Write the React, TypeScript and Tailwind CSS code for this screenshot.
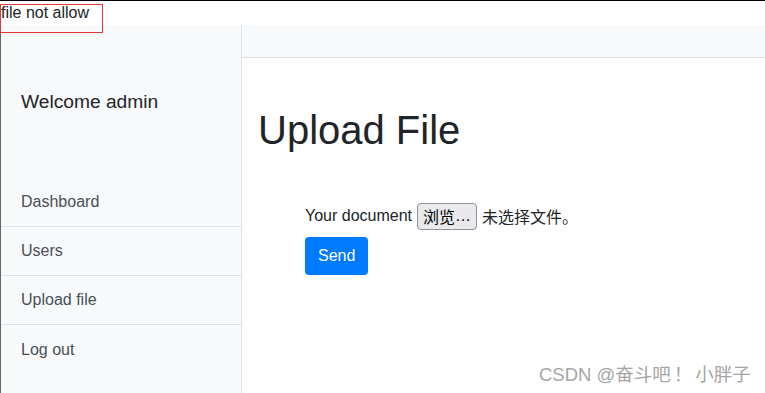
import React from "react";

const sans = { fontFamily: '"Liberation Sans", Arial, "Noto Sans CJK SC", sans-serif' };

export default function App() {
  const items = ["Dashboard", "Users", "Upload file", "Log out"];
  return (
    <div className="relative w-[765px] h-[393px] overflow-hidden bg-white border-t border-black text-[#212529]" style={sans}>
      <div className="h-[24px] text-[16px] leading-[24px] pl-[1px]">file not allow</div>
      <div className="absolute left-0 top-[3px] w-[103px] h-[29px] border border-[#e53935] pointer-events-none" />
      <div className="flex h-[368px] border-l border-[#666]">
        <aside className="w-[241px] shrink-0 bg-[#f8f9fa] border-r border-[#dee2e6] flex flex-col">
          <div className="h-[153px] pt-[1px] flex items-center pl-[20px] text-[19.2px] text-[#212529]">Welcome admin</div>
          {items.map((t, i) => (
            <div
              key={t}
              className={
                "h-[49px] flex items-center pl-[20px] text-[16px] text-[#495057] " +
                (i < 3 ? "border-b border-[#dee2e6]" : "")
              }
            >
              {t}
            </div>
          ))}
        </aside>
        <main className="flex-1 flex flex-col">
          <div className="h-[33px] bg-[#f8f9fa] border-b border-[#dee2e6]" />
          <div className="pl-[16px]">
            <h1 className="mt-[48px] text-[40px] leading-[48px] text-[#212529]">Upload File</h1>
            <div className="ml-[47px] mt-[48px] flex items-center h-[28px] text-[16px]">
              <span>Your document</span>
              <span className="ml-[5px] h-[27px] px-[5px] flex items-center bg-[#e9e9ed] border border-[#8f8f9d] rounded-[4px] text-[16px] text-black">
                <span style={{ fontFamily: '"Noto Sans CJK SC", sans-serif' }}>浏览</span>
                <span style={{ fontFamily: '"Liberation Sans", sans-serif' }}>…</span>
              </span>
              <span className="ml-[5px]" style={{ fontFamily: '"Noto Sans CJK SC", sans-serif' }}>未选择文件。</span>
            </div>
            <button className="ml-[47px] mt-[7px] h-[38px] px-[13px] bg-[#007bff] text-white rounded-[4px] text-[16px] leading-[24px]">
              Send
            </button>
          </div>
        </main>
      </div>
      <div
        className="absolute left-[539px] top-[361px] text-[18.5px] leading-[26px] text-[#a6a6a6] whitespace-nowrap"
        style={{ fontFamily: '"Liberation Sans", "Noto Sans CJK SC", sans-serif' }}
      >
        CSDN @奋斗吧<span className="px-[3px]">！</span>小胖子
      </div>
    </div>
  );
}
